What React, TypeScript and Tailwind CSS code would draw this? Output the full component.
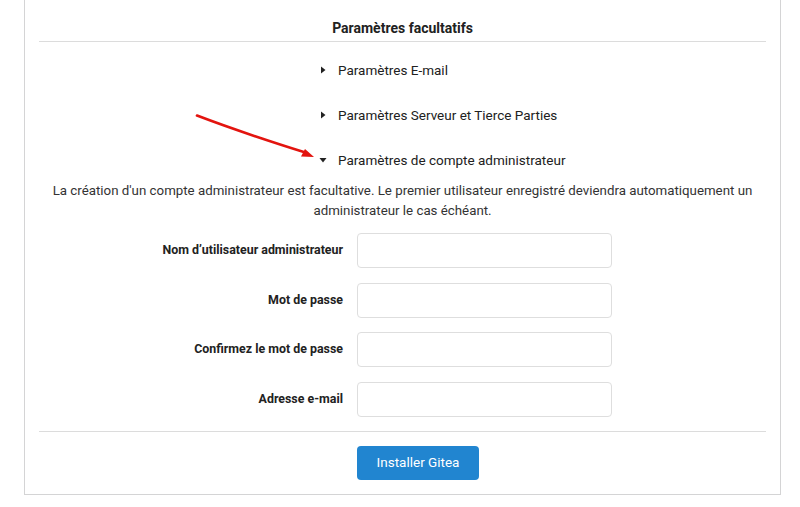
import React from "react";

const font = { fontFamily: "Roboto, 'Liberation Sans', sans-serif" };

function Caret({ open }: { open?: boolean }) {
  return (
    <svg width="8" height="8" viewBox="0 0 8 8" className="shrink-0">
      {open ? <path d="M0.5 2 L7.5 2 L4 6.5 Z" fill="#222" /> : <path d="M2 0.5 L6.5 4 L2 7.5 Z" fill="#222" />}
    </svg>
  );
}

const sections = [
  { title: "Paramètres E-mail", open: false },
  { title: "Paramètres Serveur et Tierce Parties", open: false },
  { title: "Paramètres de compte administrateur", open: true },
];

const fields = [
  { label: "Nom d’utilisateur administrateur", type: "text" },
  { label: "Mot de passe", type: "password" },
  { label: "Confirmez le mot de passe", type: "password" },
  { label: "Adresse e-mail", type: "email" },
];

export default function App() {
  return (
    <div className="w-[800px] h-[507px] bg-white overflow-hidden text-[#212121]" style={font}>
      <div className="relative ml-[24px] w-[757px] border-x border-b border-[#d4d4d5] px-[14px] pt-[18px] pb-[14px]">
        <h4 className="text-center text-[14px] font-bold leading-5 pb-[3px] border-b border-[#dcdcdc]">
          Paramètres facultatifs
        </h4>

        <div className="mt-[18px] flex flex-col gap-[25px] pl-[280px]">
          {sections.map((s) => (
            <div key={s.title} className="flex items-center gap-[11px] text-[13.5px] leading-5 cursor-pointer">
              <Caret open={s.open} />
              <span>{s.title}</span>
            </div>
          ))}
        </div>

        <p className="mt-[11px] text-center text-[13.3px] leading-5 text-[#333]">
          La création d'un compte administrateur est facultative. Le premier utilisateur enregistré deviendra automatiquement un
          administrateur le cas échéant.
        </p>

        <div className="mt-[12px] flex flex-col gap-[14.5px]">
          {fields.map((f) => (
            <div key={f.label} className="flex items-center gap-[14px]">
              <label className="w-[304px] text-right text-[12.4px] font-bold text-[#222]">{f.label}</label>
              <input
                type={f.type}
                className="w-[255px] h-[35px] rounded-[4px] border border-[#dedede] bg-white px-3 text-sm outline-none"
              />
            </div>
          ))}
        </div>

        <div className="mt-[14px] border-t border-[#dcdcdc] pt-[14px] flex">
          <button className="ml-[318px] w-[122px] h-[34px] rounded-[4px] bg-[#2185d0] text-white text-[13.5px]">
            Installer Gitea
          </button>
        </div>

        <svg className="absolute left-0 top-0 pointer-events-none" width="757" height="200" viewBox="0 0 757 200">
          <path d="M172 115.5 C 210 130, 250 143, 282 153" stroke="#e3140f" strokeWidth="2.6" fill="none" strokeLinecap="round" />
          <path d="M289 157 L276 156.5 L280 149 Z" fill="#e3140f" />
        </svg>
      </div>
    </div>
  );
}
